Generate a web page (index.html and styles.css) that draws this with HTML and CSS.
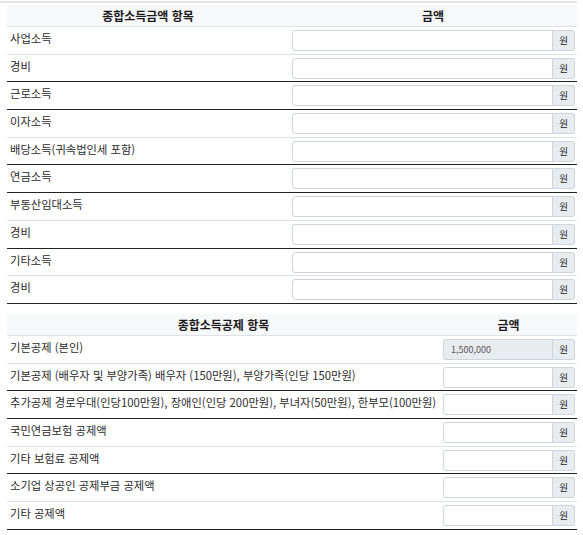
FILE: index.html
```html
<!DOCTYPE html>
<html lang="ko">
  <head>
    <meta charset="utf-8">
    <title>종합소득세 계산</title>
    <link rel="stylesheet" href="styles.css">
  </head>
  <body>
    <div class="page">
      <div class="sheet income">
        <div class="row head">
          <div class="cell">종합소득금액 항목</div>
          <div class="cell">금액</div>
        </div>
        <div class="row light">
          <div class="label">사업소득</div>
          <div class="amount"><input type="text"><span class="unit">원</span></div>
        </div>
        <div class="row">
          <div class="label">경비</div>
          <div class="amount"><input type="text"><span class="unit">원</span></div>
        </div>
        <div class="row">
          <div class="label">근로소득</div>
          <div class="amount"><input type="text"><span class="unit">원</span></div>
        </div>
        <div class="row light">
          <div class="label">이자소득</div>
          <div class="amount"><input type="text"><span class="unit">원</span></div>
        </div>
        <div class="row">
          <div class="label">배당소득(귀속법인세 포함)</div>
          <div class="amount"><input type="text"><span class="unit">원</span></div>
        </div>
        <div class="row">
          <div class="label">연금소득</div>
          <div class="amount"><input type="text"><span class="unit">원</span></div>
        </div>
        <div class="row light">
          <div class="label">부동산임대소득</div>
          <div class="amount"><input type="text"><span class="unit">원</span></div>
        </div>
        <div class="row">
          <div class="label">경비</div>
          <div class="amount"><input type="text"><span class="unit">원</span></div>
        </div>
        <div class="row light">
          <div class="label">기타소득</div>
          <div class="amount"><input type="text"><span class="unit">원</span></div>
        </div>
        <div class="row">
          <div class="label">경비</div>
          <div class="amount"><input type="text"><span class="unit">원</span></div>
        </div>
      </div>

      <div class="sheet deduction">
        <div class="row head">
          <div class="cell">종합소득공제 항목</div>
          <div class="cell">금액</div>
        </div>
        <div class="row light">
          <div class="label">기본공제 (본인)</div>
          <div class="amount"><input type="text" value="1,500,000" disabled><span class="unit">원</span></div>
        </div>
        <div class="row">
          <div class="label">기본공제 (배우자 및 부양가족) 배우자 (150만원), 부양가족(인당 150만원)</div>
          <div class="amount"><input type="text"><span class="unit">원</span></div>
        </div>
        <div class="row">
          <div class="label">추가공제 경로우대(인당100만원), 장애인(인당 200만원), 부녀자(50만원), 한부모(100만원)</div>
          <div class="amount"><input type="text"><span class="unit">원</span></div>
        </div>
        <div class="row light">
          <div class="label">국민연금보험 공제액</div>
          <div class="amount"><input type="text"><span class="unit">원</span></div>
        </div>
        <div class="row">
          <div class="label">기타 보험료 공제액</div>
          <div class="amount"><input type="text"><span class="unit">원</span></div>
        </div>
        <div class="row light">
          <div class="label">소기업 상공인 공제부금 공제액</div>
          <div class="amount"><input type="text"><span class="unit">원</span></div>
        </div>
        <div class="row">
          <div class="label">기타 공제액</div>
          <div class="amount"><input type="text"><span class="unit">원</span></div>
        </div>
      </div>
    </div>
  </body>
</html>
```

FILE: styles.css
```css
body {
  margin: 0;
  font-family: "Noto Sans CJK KR", "Noto Sans", sans-serif;
  font-size: 11.3px;
  color: #2b2b2b;
  background: #fff;
}

.page {
  width: 577px;
  margin-top: 1px;
  border-top: 2px solid #e4e4e4;
  padding: 2px 0 0 7px;
  box-sizing: border-box;
}

.sheet {
  width: 570px;
}

.deduction {
  margin-top: 10px;
}

.row {
  display: grid;
  height: 27.7px;
  box-sizing: border-box;
  border-bottom: 1px solid #222;
}

.row.light {
  border-bottom-color: #dee2e6;
}

.income .row {
  grid-template-columns: 282px 288px;
}

.deduction .row {
  grid-template-columns: 433px 137px;
}

.row.head {
  height: 22px;
  background: #f7f8f9;
  border-bottom: 1px solid #dee2e6;
  font-weight: bold;
  font-size: 12px;
  color: #1a1a1a;
}

.head .cell {
  text-align: center;
  line-height: 21px;
}

.label {
  padding: 2px 0 0 3px;
  line-height: 18px;
  white-space: nowrap;
}

.amount {
  display: flex;
  padding: 3px 2px 0 3px;
}

.amount input {
  flex: 1;
  min-width: 0;
  height: 21px;
  box-sizing: border-box;
  margin: 0;
  padding: 0 7px;
  border: 1px solid #ced4da;
  border-radius: 3px 0 0 3px;
  font-family: inherit;
  font-size: 9px;
  color: #555;
  background: #fff;
}

.amount input:disabled {
  background: #e9ecef;
}

.unit {
  width: 22px;
  height: 21px;
  box-sizing: border-box;
  border: 1px solid #ced4da;
  border-left: none;
  border-radius: 0 3px 3px 0;
  background: #e9ecef;
  font-size: 9.5px;
  line-height: 19px;
  text-align: center;
  color: #222;
}
```
